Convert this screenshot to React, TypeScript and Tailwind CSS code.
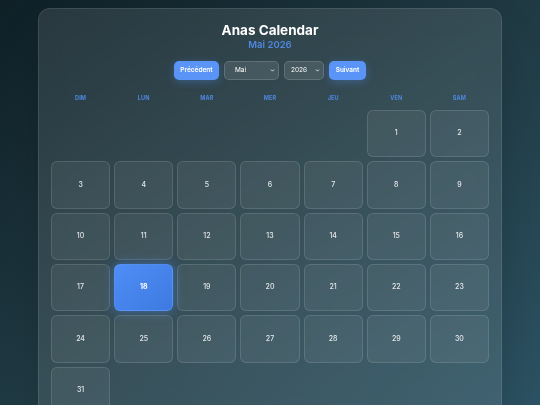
import { ChevronDown } from "lucide-react";

const weekdays = ["Dim", "Lun", "Mar", "Mer", "Jeu", "Ven", "Sam"];
const months = ["Janvier", "Février", "Mars", "Avril", "Mai", "Juin", "Juillet", "Août", "Septembre", "Octobre", "Novembre", "Décembre"];

export default function App() {
  // mai 2026 commence un vendredi
  const offset = 5;
  const days = Array.from({ length: 31 }, (_, i) => i + 1);
  const today = 18;

  return (
    <div
      className="h-screen w-full overflow-hidden bg-gradient-to-br from-[#0f2027] via-[#203a43] to-[#2c5364] flex justify-center pt-2"
      style={{ fontFamily: "Inter, 'Noto Sans', sans-serif" }}
    >
      <div className="w-[464px] h-[420px] shrink-0 rounded-xl border border-white/10 bg-white/10 px-3 pt-3 shadow-2xl backdrop-blur-md">
        <h1 className="text-center text-[13.5px] leading-[18px] font-bold text-white">Anas Calendar</h1>
        <p className="text-center text-[9.5px] leading-[12px] font-semibold text-[#4f88e0]">Mai 2026</p>

        <div className="mt-2.5 flex h-[19px] items-center justify-center gap-[5px]">
          <button className="h-[19px] w-[45px] rounded-[5px] bg-[#5a94f6] text-[6.5px] font-semibold text-white shadow-[0_2px_8px_rgba(79,142,247,0.35)]">
            Précédent
          </button>
          <div className="relative flex h-[19px]">
            <select
              defaultValue="Mai"
              className="block h-[19px] w-[55px] appearance-none rounded-[5px] border border-white/15 bg-white/10 pl-[10px] text-[6.5px] leading-[17px] text-white outline-none"
            >
              {months.map((m) => (
                <option key={m} value={m} className="text-black">
                  {m}
                </option>
              ))}
            </select>
            <ChevronDown className="pointer-events-none absolute right-[4px] top-[7px] h-[5px] w-[5px] text-white" strokeWidth={4} />
          </div>
          <div className="relative flex h-[19px]">
            <select
              defaultValue="2026"
              className="block h-[19px] w-[40px] appearance-none rounded-[5px] border border-white/15 bg-white/10 pl-[6px] text-[6.5px] leading-[17px] text-white outline-none"
            >
              {[2024, 2025, 2026, 2027, 2028].map((y) => (
                <option key={y} value={y} className="text-black">
                  {y}
                </option>
              ))}
            </select>
            <ChevronDown className="pointer-events-none absolute right-[4px] top-[7px] h-[5px] w-[5px] text-white" strokeWidth={4} />
          </div>
          <button className="h-[19px] w-[37px] rounded-[5px] bg-[#5a94f6] text-[6.5px] font-semibold text-white shadow-[0_2px_8px_rgba(79,142,247,0.35)]">
            Suivant
          </button>
        </div>

        <div className="mt-[14px] grid grid-cols-7 gap-1">
          {weekdays.map((d) => (
            <div key={d} className="text-center text-[5.5px] leading-[8px] font-bold uppercase tracking-wide text-[#4f88e0]">
              {d}
            </div>
          ))}
        </div>

        <div className="mt-2 grid grid-cols-7 gap-1">
          {Array.from({ length: offset }, (_, i) => (
            <div key={"e" + i} className="aspect-[5/4]" />
          ))}
          {days.map((d) =>
            d === today ? (
              <div
                key={d}
                className="aspect-[5/4] flex items-center justify-center rounded-[6px] border border-[#6ea2ff]/40 bg-gradient-to-br from-[#4f8ef7] to-[#3d7ae0] text-[7px] font-bold text-white shadow-[0_0_12px_rgba(79,142,247,0.5)]"
              >
                {d}
              </div>
            ) : (
              <div
                key={d}
                className="aspect-[5/4] flex items-center justify-center rounded-[6px] border border-white/[0.12] bg-white/[0.06] text-[7px] font-medium text-white/85"
              >
                {d}
              </div>
            )
          )}
        </div>
      </div>
    </div>
  );
}
